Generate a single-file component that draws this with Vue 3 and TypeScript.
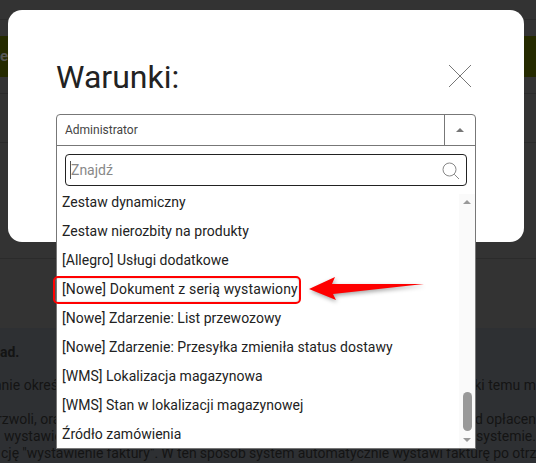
<template>
  <div class="page">
    <!-- strona pod nakładką -->
    <div class="top"></div>
    <div class="band"><span>ek</span></div>
    <div class="row-a"></div>
    <div class="row-b"></div>
    <div class="row-c"></div>
    <div class="row-d"></div>
    <div class="content">
      <p class="lead">ad.</p>
      <div class="line first"><span class="cut-a">anie określ</span><span>ki temu m</span></div>
      <div class="line second"><span class="cut-r">rzwoli, ora</span><span>ad opłacen</span></div>
      <div class="line"><span class="indent">wystawie</span><span>systemie.</span></div>
      <div class="line last">cję "wystawienie faktury". W ten sposób system automatycznie wystawi fakturę po otrz</div>
    </div>

    <section class="modal">
      <header class="modal-head">
        <h1>Warunki:</h1>
        <svg class="close" width="24" height="24" viewBox="0 0 24 24">
          <path d="M1 1 L23 23 M23 1 L1 23" stroke="#777" stroke-width="1" fill="none" />
        </svg>
      </header>

      <div class="select">
        <div class="select-head">
          <span class="select-value">Administrator</span>
          <span class="select-toggle"><i class="tri up"></i></span>
        </div>
        <div class="dropdown">
          <div class="search">
            <i class="caret"></i>
            <span class="placeholder">Znajdź</span>
            <svg class="loupe" width="18" height="18" viewBox="0 0 18 18">
              <circle cx="7.5" cy="7.5" r="6.5" stroke="#888" stroke-width="1" fill="none" />
              <path d="M12.3 12.3 L17 17" stroke="#888" stroke-width="1" fill="none" />
            </svg>
          </div>
          <div class="list-wrap">
            <ul class="list">
              <li v-for="item in items" :key="item" :class="{ marked: item === marked }">{{ item }}</li>
            </ul>
            <div class="scrollbar">
              <i class="tri up"></i>
              <i class="thumb"></i>
              <i class="tri down"></i>
            </div>
          </div>
        </div>
      </div>
    </section>

    <svg class="arrow" width="126" height="32" viewBox="0 0 126 32">
      <path d="M3 14 L29 2 L26 9 L118 9 L27 19 L30 25 Z" fill="#fe0000" />
    </svg>
  </div>
</template>

<script setup lang="ts">
const marked = '[Nowe] Dokument z serią wystawiony'

const items: string[] = [
  'Zestaw dynamiczny',
  'Zestaw nierozbity na produkty',
  '[Allegro] Usługi dodatkowe',
  marked,
  '[Nowe] Zdarzenie: List przewozowy',
  '[Nowe] Zdarzenie: Przesyłka zmieniła status dostawy',
  '[WMS] Lokalizacja magazynowa',
  '[WMS] Stan w lokalizacji magazynowej',
  'Źródło zamówienia',
]
</script>

<style>
html, body { margin: 0; background: #333; overflow: hidden; }
</style>

<style scoped>
.page {
  position: relative;
  width: 536px;
  height: 463px;
  overflow: hidden;
  background: #333;
  font-family: Roboto, sans-serif;
}

/* tło */
.top { height: 19px; border-bottom: 1px solid #2b2b2b; }
.band {
  height: 41px;
  margin-top: 16px;
  background: #252a00;
  color: #555;
  font-size: 15px;
  font-weight: 700;
  line-height: 41px;
}
.row-a { height: 16px; border-bottom: 1px solid #2b2b2b; }
.row-b { height: 48px; border-bottom: 1px solid #2b2b2b; }
.row-c { height: 115px; border-bottom: 1px solid #2b2b2b; }
.row-d { height: 69px; }
.content {
  height: 135px;
  background: #2e3033;
  color: #141414;
  font-size: 14px;
  overflow: hidden;
}
.lead { margin: 0; padding-top: 16px; height: 49px; box-sizing: border-box; font-weight: 700; }
.line { display: flex; justify-content: space-between; white-space: nowrap; line-height: 17px; }
.second { margin-top: 17px; }
.indent { padding-left: 4px; }
.cut-a { margin-left: -6px; }
.cut-r { margin-left: -3px; }
.last { display: block; padding-left: 1px; word-spacing: -0.3px; }

.modal {
  position: absolute;
  left: 8px;
  top: 10px;
  width: 420px;
  height: 232px;
  padding: 0 48px;
  background: #fff;
  border-radius: 14px;
}
.modal-head { display: flex; justify-content: space-between; align-items: center; height: 104px; padding-top: 30px; box-sizing: border-box; }
.modal-head h1 { margin: 0; font-size: 32px; font-weight: 400; color: #222; }
.close { margin: 0 4px 2px 0; }

.select { border: 1px solid #777; border-radius: 4px 4px 0 0; box-sizing: border-box; width: 420px; }
.select-head { display: flex; height: 30px; }
.select-value { flex: 1; padding-left: 8px; font-size: 12px; line-height: 30px; color: #444; }
.select-toggle { display: flex; width: 30px; border-left: 1px solid #777; align-items: center; justify-content: center; }

.tri { display: block; width: 0; height: 0; border-left: 4px solid transparent; border-right: 4px solid transparent; }
.tri.up { border-bottom: 4px solid #777; }
.tri.down { border-top: 4px solid #999; }

.dropdown {
  position: absolute;
  left: 48px;
  top: 135px;
  width: 420px;
  height: 304px;
  box-sizing: border-box;
  background: #fff;
  border: 1px solid #777;
}
.search {
  display: flex;
  align-items: center;
  height: 32px;
  margin: 8px 8px 0;
  padding: 0 6px 0 4px;
  box-sizing: border-box;
  border: 1px solid #222;
  border-radius: 4px;
}
.caret { width: 1px; height: 18px; background: #555; }
.placeholder { flex: 1; font-size: 14px; color: #888; }
.loupe { margin-top: 1px; }

.list-wrap { position: relative; margin-top: 2px; }
.list { margin: 0; padding: 0; list-style: none; }
.list li {
  position: relative;
  height: 29px;
  padding-left: 5px;
  font-size: 14px;
  letter-spacing: 0.02px;
  line-height: 29px;
  color: #222;
  white-space: nowrap;
}
.list li.marked { letter-spacing: 0.13px; }
.list li.marked::before {
  content: '';
  position: absolute;
  left: -4px;
  top: 1px;
  width: 244px;
  height: 24px;
  border: 2px solid #f00;
  border-radius: 5px;
  box-shadow: inset 0 0 2px #bbb;
}

.scrollbar {
  position: absolute;
  top: 6px;
  right: 0;
  width: 16px;
  height: 254px;
  display: flex;
  flex-direction: column;
  align-items: center;
  background: #fafafa;
}
.scrollbar .tri.up { margin-top: 6px; border-bottom-color: #999; }
.thumb { width: 9px; height: 39px; margin-top: 188px; border-radius: 5px; background: #999; }
.scrollbar .tri.down { margin-top: 7px; }

.arrow { position: absolute; left: 306px; top: 275px; filter: drop-shadow(1px 2px 2px rgba(0, 0, 0, 0.35)); }
</style>
